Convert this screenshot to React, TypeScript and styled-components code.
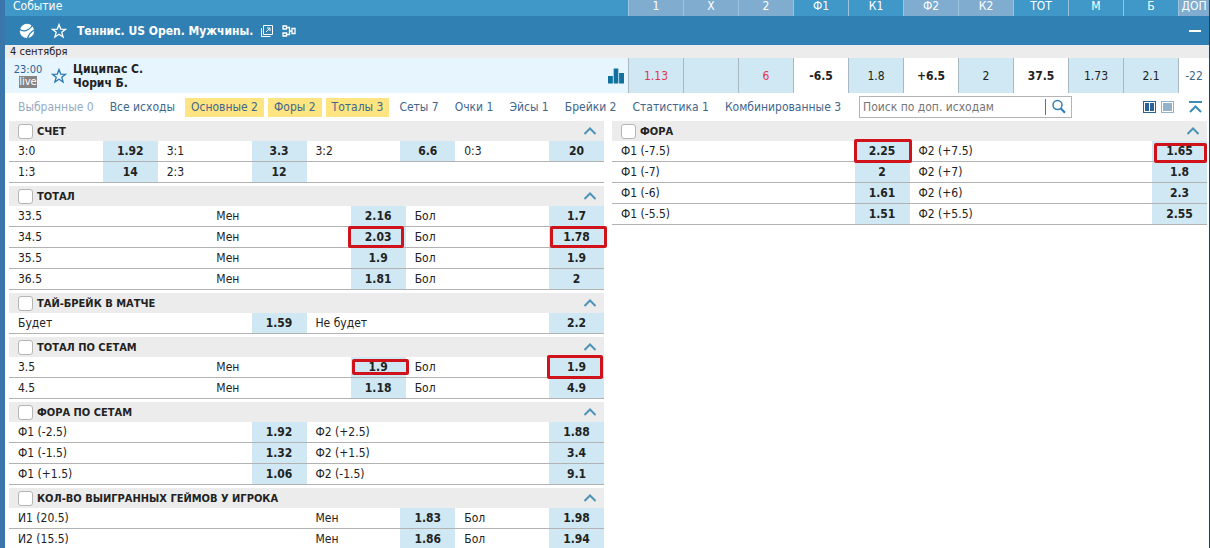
import React from 'react';
import styled, { createGlobalStyle, css } from 'styled-components';

const GlobalStyle = createGlobalStyle`
  *, *::before, *::after { box-sizing: border-box; }
  html { scrollbar-width: none; }
  body {
    margin: 0;
    background: #fff;
    color: #222;
    font-family: "DejaVu Sans Condensed", "DejaVu Sans", sans-serif;
    font-stretch: condensed;
    font-size: 12px;
  }
  button, input { font: inherit; color: inherit; }
  button { border: 0; padding: 0; background: none; cursor: pointer; }
  table { border-collapse: separate; border-spacing: 0; table-layout: fixed; width: 100%; }
  td, th { padding: 0; }
`;

const Page = styled.main`
  min-height: 100vh;
  border-left: 5px solid #3a76ab;
  border-right: 1px solid #2f3e4d;
  background: #fff;
`;

/* Coupon table */
const EventCol = styled.col``;
const OddCol = styled.col`
  width: 55px;
`;
const MoreCol = styled.col`
  width: 31px;
`;

const HeadCell = styled.th<{ $light?: boolean; $first?: boolean }>`
  height: 16px;
  line-height: 12px;
  vertical-align: top;
  font-weight: normal;
  color: #fff;
  text-align: ${(p) => (p.$first ? 'left' : 'center')};
  padding-left: ${(p) => (p.$first ? '8px' : '0')};
  background: ${(p) => (p.$light ? '#7faccf' : '#4098c8')};
  border-left: ${(p) => (p.$first ? '0' : '1px solid #9cc3dd')};
`;

const TitleCell = styled.td`
  height: 29px;
  background: #3080b4;
  color: #fff;
`;

const TitleBar = styled.div`
  display: flex;
  align-items: center;
  height: 29px;
  padding: 0 8px 0 14px;
`;

const Title = styled.h1`
  margin: 0 7px 0 10px;
  font-size: 12px;
  font-weight: bold;
`;

const IconButton = styled.button<{ $gap?: number; $push?: boolean; $color?: string }>`
  display: flex;
  margin-left: ${(p) => (p.$push ? 'auto' : `${p.$gap || 0}px`)};
  color: ${(p) => p.$color || 'inherit'};
`;

const DateCell = styled.td`
  height: 13px;
  padding-left: 5px;
  line-height: 13px;
  background: #ececec;
  font-size: 11px;
`;

const EventCell = styled.td`
  height: 35px;
  background: #e6f5fe;
`;

const EventInfo = styled.div`
  display: flex;
  align-items: center;
  height: 35px;
  padding: 0 4px 0 9px;
`;

const Time = styled.div`
  display: flex;
  flex-direction: column;
  align-items: center;
  width: 28px;
  line-height: 13px;
  font-size: 11px;
  color: #2a6496;
`;

const Live = styled.span`
  line-height: 12px;
  background: #858585;
  color: #fff;
`;

const Players = styled.div`
  margin-left: 6px;
  line-height: 14px;
  font-weight: bold;
`;

const LineCell = styled.td<{ $plain?: boolean }>`
  height: 35px;
  border-left: 1px solid #a9b9c1;
  background: ${(p) => (p.$plain ? '#fff' : '#cfe8f3')};
`;

const LineButton = styled.button<{ $bold?: boolean; $color?: string }>`
  display: block;
  width: 100%;
  height: 35px;
  font-weight: ${(p) => (p.$bold ? 'bold' : 'normal')};
  color: ${(p) => p.$color || '#222'};
`;

/* Filter bar */
const Filters = styled.nav`
  display: flex;
  align-items: center;
  height: 28px;
  padding: 0 6px 0 7px;
`;

const Tabs = styled.div`
  display: flex;
  gap: 4px;
`;

const Tab = styled.button<{ $on?: boolean; $muted?: boolean }>`
  height: 19px;
  padding: 0 6px;
  white-space: nowrap;
  color: ${(p) => (p.$muted ? '#93abc2' : '#41668c')};
  background: ${(p) => (p.$on ? '#ffe482' : 'transparent')};
`;

const Search = styled.form`
  display: flex;
  align-items: center;
  width: 213px;
  height: 22px;
  margin-left: 12px;
  border: 1px solid #b4b4b4;
`;

const SearchInput = styled.input`
  flex: 1;
  min-width: 0;
  height: 16px;
  padding: 0 3px;
  border: 0;
  border-right: 1px solid #2f80b5;
  outline: 0;
  background: transparent;
  &::placeholder { color: #757575; opacity: 1; }
`;

const SearchButton = styled.button`
  display: flex;
  justify-content: center;
  width: 25px;
`;

/* Markets */
const Columns = styled.div`
  display: grid;
  grid-template-columns: 1fr 1fr;
  gap: 8px;
  padding: 0 2px 0 4px;
`;

const Section = styled.section`
  margin-bottom: 3px;
`;

const SectionHead = styled.header`
  display: flex;
  align-items: center;
  height: 20px;
  padding: 0 7px 0 9px;
  background: #ececec;
`;

const SectionLabel = styled.label`
  display: flex;
  align-items: center;
  gap: 4px;
  font-size: 11px;
  font-weight: bold;
`;

const Check = styled.input`
  appearance: none;
  width: 15px;
  height: 15px;
  margin: 0;
  border: 1px solid #b5b5b5;
  border-radius: 3px;
  background: #fff;
`;

const Cell = styled.td`
  height: 21px;
  border-bottom: 1px solid #b2b2b2;
`;

const CellBody = styled.div`
  display: flex;
  align-items: center;
  height: 20px;
`;

const CellLabel = styled.span`
  flex: 1;
  padding-left: 9px;
  white-space: nowrap;
`;

type Mark = { top: number; right: number; bottom: number; left: number };

const Odd = styled.button<{ $mark?: Mark }>`
  position: relative;
  width: 55px;
  height: 20px;
  background: #cfe8f3;
  font-weight: bold;
  ${(p) =>
    p.$mark &&
    css`
      &::after {
        content: '';
        position: absolute;
        inset: ${p.$mark.top}px ${p.$mark.right}px ${p.$mark.bottom}px ${p.$mark.left}px;
        border: 3px solid #d0121b;
        border-radius: 2px;
        z-index: 1;
      }
    `}
`;

type Item = { label: string; odd?: string; span?: number; mark?: Mark };
type Market = { title: string; cols: number; rows: Item[][] };

const total = (name: string, less: string, more: string, span = 1, lessMark?: Mark, moreMark?: Mark): Item[] => [
  { label: name, span },
  { label: 'Мен', odd: less, mark: lessMark },
  { label: 'Бол', odd: more, mark: moreMark },
];

const pair = (a: string, oddA: string, b: string, oddB: string, markA?: Mark, markB?: Mark): Item[] => [
  { label: a, odd: oddA, mark: markA },
  { label: b, odd: oddB, mark: markB },
];

const leftMarkets: Market[] = [
  {
    title: 'СЧЕТ',
    cols: 4,
    rows: [
      [
        { label: '3:0', odd: '1.92' },
        { label: '3:1', odd: '3.3' },
        { label: '3:2', odd: '6.6' },
        { label: '0:3', odd: '20' },
      ],
      [
        { label: '1:3', odd: '14' },
        { label: '2:3', odd: '12' },
        { label: '', span: 2 },
      ],
    ],
  },
  {
    title: 'ТОТАЛ',
    cols: 3,
    rows: [
      total('33.5', '2.16', '1.7'),
      total('34.5', '2.03', '1.78', 1,
        { top: -1, right: 2, bottom: -1, left: -3 },
        { top: -1, right: -3, bottom: -1, left: 1 }),
      total('35.5', '1.9', '1.9'),
      total('36.5', '1.81', '2'),
    ],
  },
  { title: 'ТАЙ-БРЕЙК В МАТЧЕ', cols: 2, rows: [pair('Будет', '1.59', 'Не будет', '2.2')] },
  {
    title: 'ТОТАЛ ПО СЕТАМ',
    cols: 3,
    rows: [
      total('3.5', '1.9', '1.9', 1,
        { top: 2, right: -3, bottom: 2, left: 1 },
        { top: -2, right: 1, bottom: -2, left: -2 }),
      total('4.5', '1.18', '4.9'),
    ],
  },
  {
    title: 'ФОРА ПО СЕТАМ',
    cols: 2,
    rows: [
      pair('Ф1 (-2.5)', '1.92', 'Ф2 (+2.5)', '1.88'),
      pair('Ф1 (-1.5)', '1.32', 'Ф2 (+1.5)', '3.4'),
      pair('Ф1 (+1.5)', '1.06', 'Ф2 (-1.5)', '9.1'),
    ],
  },
  {
    title: 'КОЛ-ВО ВЫИГРАННЫХ ГЕЙМОВ У ИГРОКА',
    cols: 4,
    rows: [total('И1 (20.5)', '1.83', '1.98', 2), total('И2 (15.5)', '1.86', '1.94', 2)],
  },
];

const rightMarkets: Market[] = [
  {
    title: 'ФОРА',
    cols: 2,
    rows: [
      pair('Ф1 (-7.5)', '2.25', 'Ф2 (+7.5)', '1.65',
        { top: -2, right: -2, bottom: -2, left: -1 },
        { top: 2, right: 0, bottom: -2, left: 2 }),
      pair('Ф1 (-7)', '2', 'Ф2 (+7)', '1.8'),
      pair('Ф1 (-6)', '1.61', 'Ф2 (+6)', '2.3'),
      pair('Ф1 (-5.5)', '1.51', 'Ф2 (+5.5)', '2.55'),
    ],
  },
];

const heads = [
  { text: '1', light: true },
  { text: 'X', light: true },
  { text: '2', light: true },
  { text: 'Ф1' },
  { text: 'К1' },
  { text: 'Ф2', light: true },
  { text: 'К2', light: true },
  { text: 'ТОТ' },
  { text: 'М' },
  { text: 'Б' },
  { text: 'ДОП', light: true },
];

const line = [
  { text: '1.13', color: '#e0364c' },
  { text: '' },
  { text: '6', color: '#e0364c' },
  { text: '-6.5', bold: true },
  { text: '1.8' },
  { text: '+6.5', bold: true },
  { text: '2' },
  { text: '37.5', bold: true },
  { text: '1.73' },
  { text: '2.1' },
  { text: '-22', color: '#41668c', plain: true },
];

const tabs = [
  { text: 'Выбранные 0', muted: true },
  { text: 'Все исходы' },
  { text: 'Основные 2', on: true },
  { text: 'Форы 2', on: true },
  { text: 'Тоталы 3', on: true },
  { text: 'Сеты 7' },
  { text: 'Очки 1' },
  { text: 'Эйсы 1' },
  { text: 'Брейки 2' },
  { text: 'Статистика 1' },
  { text: 'Комбинированные 3' },
];

const Star = () => (
  <svg width="16" height="16" viewBox="0 0 16 16" fill="none" stroke="currentColor" strokeWidth="1.3">
    <path d="M8 1.6 9.7 6.1 14.6 6.3 10.8 9.3 12.1 14 8 11.3 3.9 14 5.2 9.3 1.4 6.3 6.3 6.1Z" />
  </svg>
);

const Ball = () => (
  <svg width="16" height="16" viewBox="0 0 16 16">
    <circle cx="8" cy="8" r="7.2" fill="#fff" />
    <path d="M0 6C4 9.500 10 8 13.600 2" fill="none" stroke="#3080b4" strokeWidth="1.300" />
    <path d="M8.500 15.500C9.500 12 11.500 9 15.500 7" fill="none" stroke="#3080b4" strokeWidth="1.300" />
  </svg>
);

const Popup = () => (
  <svg width="14" height="14" viewBox="0 0 14 14" fill="none" stroke="#fff">
    <path d="M3.500 1.500H12.500V10.500H3.500Z" />
    <path d="M1.500 4V12.500H10.500" />
    <path d="M6 8 10 4M7 4H10V7" />
  </svg>
);

const Bracket = () => (
  <svg width="14" height="14" viewBox="0 0 14 14" fill="none" stroke="#fff" strokeWidth="1.300">
    <path d="M1 2H4.500V5H1ZM1 9H4.500V12H1ZM10 4.500H13V9.500H10Z" />
    <path d="M4.500 3.500H7.500V10.500H4.500M7.500 7H10" />
  </svg>
);

const Bars = () => (
  <svg width="16" height="16" viewBox="0 0 16 16" fill="#11719f">
    <path d="M0 8H5V15.500H0ZM5.500 0.500H10.500V15.500H5.500ZM11 5H16V15.500H11Z" />
    <path d="M5.200 0V16M10.700 0V16" stroke="#e6f5fe" strokeWidth="0.500" />
  </svg>
);

const Lens = () => (
  <svg width="16" height="16" viewBox="0 0 16 16" fill="none" stroke="#2f80b5">
    <circle cx="6.500" cy="6" r="4.500" strokeWidth="1.500" />
    <path d="M9.800 9.500 14 13.700" strokeWidth="2.200" />
  </svg>
);

const TwoPanes = () => (
  <svg width="13" height="12" viewBox="0 0 13 12">
    <rect x="0.500" y="0.500" width="12" height="11" fill="#fff" stroke="#2a6496" />
    <path d="M2 2H6V10H2ZM7 2H11V10H7Z" fill="#2a6496" />
  </svg>
);

const OnePane = () => (
  <svg width="13" height="12" viewBox="0 0 13 12">
    <rect x="0.500" y="0.500" width="12" height="11" fill="#fff" stroke="#94b3cb" />
    <path d="M2 2H11V10H2Z" fill="#94b3cb" />
  </svg>
);

const ToTop = () => (
  <svg width="15" height="12" viewBox="0 0 15 12" fill="none" stroke="#3b8db8" strokeWidth="2">
    <path d="M1 1H14M2 11 7.500 5.500 13 11" />
  </svg>
);

const Chevron = () => (
  <svg width="14" height="10" viewBox="0 0 14 10" fill="none" stroke="#4b93b8" strokeWidth="2">
    <path d="M1.500 8 7 2.500 12.500 8" />
  </svg>
);

const Minus = () => (
  <svg width="12" height="4" viewBox="0 0 12 4">
    <path d="M0 1H12V3H0Z" fill="#fff" />
  </svg>
);

function MarketView({ market }: { market: Market }) {
  return (
    <Section>
      <SectionHead>
        <SectionLabel>
          <Check type="checkbox" />
          {market.title}
        </SectionLabel>
        <IconButton $push aria-label="Свернуть">
          <Chevron />
        </IconButton>
      </SectionHead>
      <table>
        <colgroup>
          {Array.from({ length: market.cols }, (_, i) => (
            <col key={i} />
          ))}
        </colgroup>
        <tbody>
          {market.rows.map((row, r) => (
            <tr key={r}>
              {row.map((item, i) => (
                <Cell key={i} colSpan={item.span}>
                  <CellBody>
                    <CellLabel>{item.label}</CellLabel>
                    {item.odd && <Odd $mark={item.mark}>{item.odd}</Odd>}
                  </CellBody>
                </Cell>
              ))}
            </tr>
          ))}
        </tbody>
      </table>
    </Section>
  );
}

export default function App() {
  return (
    <Page>
      <GlobalStyle />
      <table>
        <colgroup>
          <EventCol />
          {line.slice(0, 10).map((_, i) => (
            <OddCol key={i} />
          ))}
          <MoreCol />
        </colgroup>
        <thead>
          <tr>
            <HeadCell $first>Событие</HeadCell>
            {heads.map((h) => (
              <HeadCell key={h.text} $light={h.light}>
                {h.text}
              </HeadCell>
            ))}
          </tr>
        </thead>
        <tbody>
          <tr>
            <TitleCell colSpan={12}>
              <TitleBar>
                <Ball />
                <IconButton $gap={16} aria-label="В избранное">
                  <Star />
                </IconButton>
                <Title>Теннис. US Open. Мужчины.</Title>
                <IconButton aria-label="Открыть в новом окне">
                  <Popup />
                </IconButton>
                <IconButton $gap={8} aria-label="Сетка турнира">
                  <Bracket />
                </IconButton>
                <IconButton $push aria-label="Свернуть">
                  <Minus />
                </IconButton>
              </TitleBar>
            </TitleCell>
          </tr>
          <tr>
            <DateCell colSpan={12}>4 сентября</DateCell>
          </tr>
          <tr>
            <EventCell>
              <EventInfo>
                <Time>
                  23:00
                  <Live>live</Live>
                </Time>
                <IconButton $gap={9} $color="#2a78ab" aria-label="В избранное">
                  <Star />
                </IconButton>
                <Players>
                  Циципас С.
                  <br />
                  Чорич Б.
                </Players>
                <IconButton $push aria-label="Статистика">
                  <Bars />
                </IconButton>
              </EventInfo>
            </EventCell>
            {line.map((l, i) => (
              <LineCell key={i} $plain={l.bold || l.plain}>
                {l.text && (
                  <LineButton $bold={l.bold} $color={l.color}>
                    {l.text}
                  </LineButton>
                )}
              </LineCell>
            ))}
          </tr>
        </tbody>
      </table>
      <Filters>
        <Tabs>
          {tabs.map((t) => (
            <Tab key={t.text} $on={t.on} $muted={t.muted}>
              {t.text}
            </Tab>
          ))}
        </Tabs>
        <Search onSubmit={(e) => e.preventDefault()}>
          <SearchInput placeholder="Поиск по доп. исходам" aria-label="Поиск по доп. исходам" />
          <SearchButton aria-label="Найти">
            <Lens />
          </SearchButton>
        </Search>
        <IconButton $push aria-label="Две колонки">
          <TwoPanes />
        </IconButton>
        <IconButton $gap={5} aria-label="Одна колонка">
          <OnePane />
        </IconButton>
        <IconButton $gap={14} aria-label="Свернуть все">
          <ToTop />
        </IconButton>
      </Filters>
      <Columns>
        <div>
          {leftMarkets.map((m) => (
            <MarketView key={m.title} market={m} />
          ))}
        </div>
        <div>
          {rightMarkets.map((m) => (
            <MarketView key={m.title} market={m} />
          ))}
        </div>
      </Columns>
    </Page>
  );
}
